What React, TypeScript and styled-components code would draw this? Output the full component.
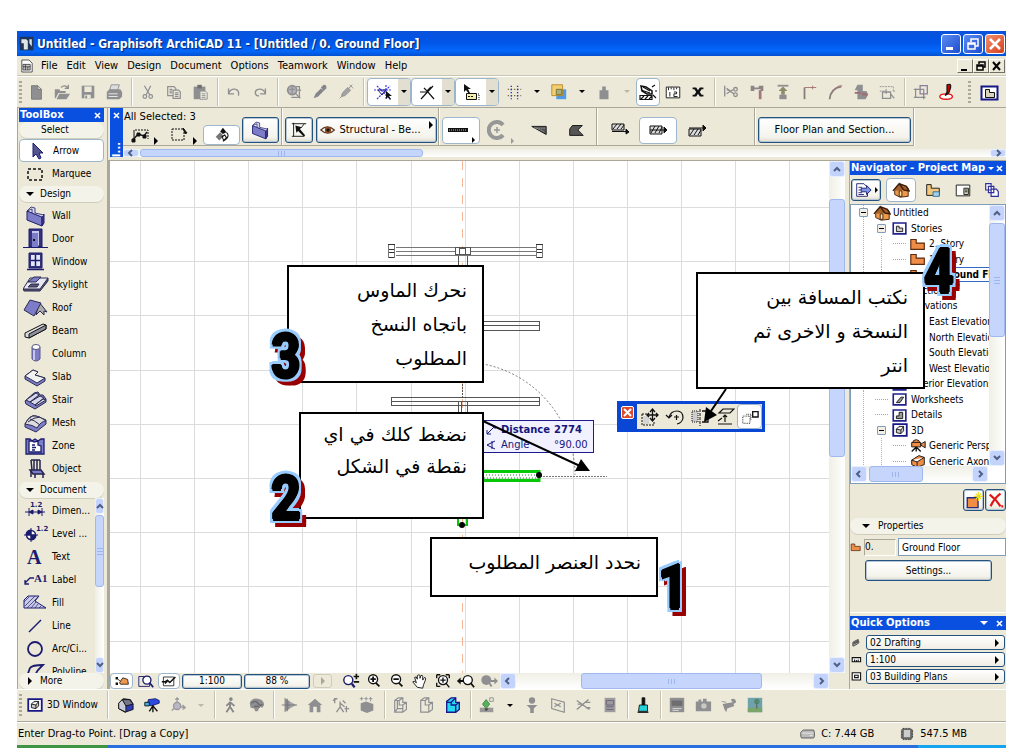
import React from "react";
import styled, { createGlobalStyle, css } from "styled-components";

const UI = `"DejaVu Sans Condensed", Tahoma, "DejaVu Sans", sans-serif`;
const WIDE = `"DejaVu Sans", Verdana, sans-serif`;
const FACE = "#ece9d8";
const BLUE = "#0a50e0";

const Global = createGlobalStyle`
  *, *::before, *::after { box-sizing: border-box; }
  body { margin: 0; background: #fff; font: 11px/14px ${UI}; color: #000; }
  button, input, select { font: inherit; color: inherit; padding: 0; margin: 0; border: 0; background: none; border-radius: 0; }
  svg { display: block; flex: none; }
  ul { list-style: none; margin: 0; padding: 0; }
`;

/* ---------- icons ---------- */

const G = "#8f8f92";
const K = "#111";
const N = "#1c1c6e";
const P = "#7c7cc8";
const L = "#c4c4ee";

const icons: Record<string, React.ReactNode> = {
  /* main toolbar */
  newDoc: <path d="M5 3h7l4 4v11H5z M12 3v4h4" fill={G} stroke="#77777b" />,
  open: <g fill={G}><path d="M2 7h5l1 2h6v2H6l-3 6H2z" /><path d="M7 12h12l-4 6H4z" /><path d="M9 5q4-4 8 1M17 2v4h-4" fill="none" stroke={G} strokeWidth="1.5" /></g>,
  save: <g><path d="M3 3h14v14H3z" fill={G} /><path d="M6 4h8v6H6zM6 13h7v4H6z" fill={FACE} /><path d="M7 14h2v3H7z" fill={G} /></g>,
  print: <g fill={G}><path d="M7 2h9l-2 6H5z" fill="#ddd" stroke={G} /><path d="M2 10l3-3h12l2 3v5l-3 3H2z" /><path d="M4 12h10M4 15h10" stroke="#eee" /></g>,
  cut: <g fill="none" stroke={G} strokeWidth="1.4"><path d="M6 3l6 10M13 3L8 13" /><circle cx="6.500" cy="15" r="2" /><circle cx="13" cy="15" r="2" /></g>,
  copy: <g fill={FACE} stroke={G} strokeWidth="1.3"><path d="M3 4h7l2 2v8H3z" /><path d="M9 8h6l2 2v7H9zM11 11h4M11 13h4M11 15h4M5 7h3M5 9h3M5 11h3" /></g>,
  paste: <g><path d="M3 4h13v14H3z" fill={G} /><path d="M7 2h5v4H7z" fill="#6f6f72" /><path d="M10 9h6l2 2v7h-8z" fill={FACE} stroke={G} /><path d="M12 12h4M12 14h4M12 16h4" stroke={G} /></g>,
  undo: <path d="M4 6v6h6M4 12q2-6 8-5q4 1 3 7" fill="none" stroke={G} strokeWidth="1.5" />,
  redo: <path d="M16 6v6h-6M16 12q-2-6-8-5q-4 1-3 5q1 3 4 2" fill="none" stroke={G} strokeWidth="1.5" />,
  findSel: <g fill="none" stroke={G} strokeWidth="1.4"><circle cx="8" cy="8" r="5" fill="#b5b4ba" strokeWidth="2" /><path d="M5 7h6M8 4v8M12 12l5 5" /><path d="M12 4h4v12H7M14 8h4" /></g>,
  dropper: <path d="M3 17l2-5 6-6 3 3-6 6zM11 5l3-3q4 0 3 4l-3 3z" fill="#85858c" />,
  syringe: <g fill="#a3a3a3" stroke={G}><path d="M3 17l3-3M6 11l6-6 3 3-6 6-4 1z" /><path d="M12 7l5-5M14 2l4 4" /></g>,
  snapGuide: <g fill="none"><path d="M1 8h18M4 17L17 4M4 4l13 13M13 3v14" stroke="#3a3af0" strokeDasharray="2 1" strokeWidth="1.2" /><path d="M5 8l4 5 4-5z" stroke={N} /><path d="M13 9v8l2-2 2 3 1-1-2-3h3z" fill={K} /></g>,
  snapPoint: <path d="M4 17L16 4M3 10h8l6 7M7 6l3 3 4-4" fill="none" stroke={K} strokeWidth="1.2" />,
  tracker: <g><path d="M3 2v8l2-2 3 4 1-1-2-4h3z" fill={K} /><path d="M5.500 11.500h10v6h-10z" fill="#f3f0b0" stroke={K} /><path d="M7 14.500h6" stroke={K} strokeDasharray="2 1" /><path d="M17 12h1v6h-1" stroke={K} fill="none" strokeDasharray="1 1" /></g>,
  gridSnap: <g stroke="#77773f" strokeWidth="1.500" strokeDasharray="1.500 2"><path d="M3 7h15M3 14h15" /><path d="M7 3v15M14 3v15" stroke="#2323ee" /></g>,
  layers: <g><path d="M7 7h11v11H7z" fill="#4f9be8" /><path d="M2 2h12v12H2z" fill="#f3cf72" stroke="#b78825" /><path d="M7 7h6v6H7z" fill="#a6b07b" stroke="#756a33" /></g>,
  weight: <path d="M8 4h4v4h3v10H5V8h3z" fill={G} />,
  suspend: <g stroke={K} fill="none" strokeWidth="1.2"><path d="M2 13.500h12v4H2zM3 17l3-3M7 17l3-3M11 17l3-3" /><path d="M3 4l5 1 6 4v3H9L4 9z" fill="#fff" strokeWidth="1.500" /><path d="M3 8l9 3M5 5l7 4M14 5l3-2M17 9h2M15 13l3 3" /></g>,
  ruler: <g stroke={K} fill="#fff"><path d="M2.500 4.500h15v12h-15z" /><path d="M5 5v3M8 5v2M11 5v3M14 5v2M6.500 10v5M11 10h3v2h-3v3h4" fill="none" /></g>,
  cross: <path d="M4 5h4l2 3 2-3h4v2h-2l-2 3 2 3h2v2h-4l-2-3-2 3H4v-2h2l2-3-2-3H4z" fill={K} />,
  trim: <g fill="none" stroke={G} strokeWidth="1.5"><path d="M3 3v12M6 8h3M5 6l8 6M5 12l8-5" /><circle cx="15" cy="7" r="2" /><circle cx="15" cy="13" r="2" /></g>,
  hammer: <g fill="#8c8487"><path d="M3 3h4v2h5V3h5v6h-3V7H7v2H3z" /><path d="M12 8h3v10h-3z" fill="#a3777a" /></g>,
  adjust: <g fill={G}><path d="M4 2h12v2H4z" /><path d="M10 4l5 5h-3v4H8V9H5z" fill="#8c8c69" /><path d="M6 13h8v5H6z" /></g>,
  corner: <g fill="none"><path d="M5 18V5" stroke="#8c7c7c" strokeWidth="2" /><path d="M5 5h13M14 3v4" stroke="#a56f70" /></g>,
  fillet: <g fill="none"><path d="M4 18Q5 6 17 4" stroke="#8c7c7c" strokeWidth="2" /><path d="M9 7q5-5 9-4" stroke="#a56f70" /></g>,
  resize: <g fill={G}><path d="M6 2h6v7h4l2 4-3 5H6V8H3z" /><path d="M3 10h7v2H3zM11 11h6v3h-6z" fill="#9f6f73" /></g>,
  stretch: <g fill="none" stroke={G}><path d="M2 4h15v5M2 9h5M17 9h2" strokeDasharray="2 1" /><path d="M5 10h9v7H5zM9 7v5M14 12l4 5" strokeWidth="1.4" /></g>,
  group: <g fill="none" stroke={G} strokeWidth="1.4"><path d="M4 7h9v9H4z" /><path d="M9 3h8v9H9z" stroke="#8a7d9d" /><path d="M2 7h4M2 16h4M11 16h4M13 14v4" /></g>,
  pen: <g><ellipse cx="9" cy="15" rx="7" ry="3" fill="#fff" stroke="#e81414" strokeWidth="1.5" /><path d="M8 14l2-4V2q5-2 4 3l-2 6z" fill="#c00" stroke={K} strokeWidth="1.300" /></g>,
  planView: <g><path d="M2.500 4.500h16v13h-16z" fill="#fff" stroke="#171785" strokeWidth="2" /><path d="M6.500 7.500h4v3h5v5h-9z" fill="#d9d4bd" stroke={K} /></g>,
  /* info box */
  selBox: <g fill="none" stroke={K}><path d="M5 5h13v9" strokeDasharray="2 1" /><path d="M3 15l5-6 6 2 3-4" strokeWidth="1.4" /><path d="M2 14h3v3H2zM7 8h3v3H7zM13 10h3v3h-3z" fill={K} /><path d="M4 5v12" /></g>,
  marqBox: <g fill="none" stroke={K}><path d="M3 4h12v11H3z" strokeDasharray="2 1" /><path d="M14 3l4 5-2 .500z" fill={K} /></g>,
  rotFill: <g><path d="M3 12l5-5 4 4-5 5z" fill="#777" /><path d="M11 2l4 5-4 2-3-3z" fill={K} /><path d="M15 7q4 4-1 8l-3 2M10 12l3-2 2 3-3 3z" fill="none" stroke={K} strokeWidth="1.2" /></g>,
  invPick: <g><path d="M2 3h16M2 17h14M4 2v15M16 3l-4 5" stroke={K} fill="none" /><path d="M6 5l7 2-2 2 6 7-2 1-6-6-2 2z" fill={K} /></g>,
  eye: <g><path d="M1 10q8-8 17 0q-8 8-17 0z" fill="#fff" stroke="#5b3a24" strokeWidth="1.4" /><circle cx="10" cy="10" r="4" fill="#8a4b20" /><circle cx="10" cy="10" r="2" fill={K} /></g>,
  straight: <g><path d="M0 8h20v4H0z" fill={K} /><path d="M1 10h18" stroke="#bbb" strokeDasharray="1 1" /></g>,
  arcWall: <g fill="none" stroke="#979797"><path d="M16 5a8 8 0 1 0 0 10" strokeWidth="4" /><path d="M7 10h6M10 7v6" strokeWidth="1.500" /></g>,
  trapWall: <g><path d="M2 6h16v9z" fill="#565656" stroke={K} /><path d="M5 7l11 5M4 8h13" stroke="#aaa" strokeDasharray="1 1" /></g>,
  polyWall: <path d="M6 5h11l-5 5 6 6H3V9z" fill="#565656" stroke={K} />,
  refA: <g><path d="M2 4h12v6H2z" fill="#ddd" stroke={K} /><path d="M3 9l4-5M7 9l4-5M11 9l3-4M2 11.500h16M16 9l3 3-3 2z" stroke={K} fill={K} /></g>,
  refB: <g><path d="M2 6h12v8H2z" fill="#ddd" stroke={K} /><path d="M3 13l4-7M7 13l4-7M11 13l3-6M2 10h16M16 7l3 3-3 3z" stroke={K} fill={K} /></g>,
  refC: <g><path d="M2 9h12v7H2z" fill="#ddd" stroke={K} /><path d="M3 15l4-6M7 15l4-6M11 15l3-5M2 8h16M16 5l3 3-3 3z" stroke={K} fill={K} /></g>,
  /* toolbox, 26 x 22 */
  arrow: <path d="M9 3v14l3-3 3 5 2-1-2-5h4z" fill="#555590" stroke={N} />,
  marquee: <path d="M5 6h14v11H5z" fill="none" stroke={K} strokeWidth="1.500" strokeDasharray="3 2" />,
  wall: <g stroke={N}><path d="M4 6l15 6v9L4 15z" fill={P} /><path d="M19 12l2-3v9l-2 3z" fill="#44448c" /><path d="M4 6l4-4 4 1v5l9 2-2 2L9 8V4z" fill="#d8d8e8" strokeWidth=".800" /></g>,
  door: <g><path d="M6 1h13v18H6z" fill="#33337c" stroke={N} /><path d="M9 3h7v14l-2 2V5H9z" fill={L} /><path d="M9 5h6v14H9z" fill={P} /><path d="M0 19.500h25" stroke={N} /><path d="M10 11h2v2h-2z" fill={K} /></g>,
  window: <g><path d="M6 2h13v15H6z" fill="#33337c" stroke={N} /><path d="M8 4h9v11H8z" fill="#e6e6fb" /><path d="M12.500 4v11M8 9.500h9M4 18.500h17" stroke={N} strokeWidth="1.500" /></g>,
  skylight: <g stroke="#2c2c50"><path d="M0 15l4-4h15l6-7v3l-8 10H1z" fill="#55556c" /><path d="M7 4h18l-8 11H0z" fill="#e8e8f4" /><path d="M8 10h8l-2 3H5z" fill="#55556c" /><path d="M5 8l6-5h7l-5 5z" fill={P} /></g>,
  roof: <g stroke="#2c2c50"><path d="M16 5l8 10-3-1v4l-4-4-4 4z" fill="#aaa" /><path d="M1 13L7 3l11 3-7 13z" fill={P} /></g>,
  beam: <g stroke={K}><path d="M2 13L20 4l3 1v4L6 18l-4-1z" fill="#ddd" /><path d="M6 14l17-9v4L6 18z" fill="#8e8e9d" /></g>,
  column: <g stroke="#5b5b86"><path d="M9 4v12q4 4 8 0V4z" fill={P} /><ellipse cx="13" cy="4" rx="4" ry="2.500" fill="#fff" /><path d="M11 7v10" stroke={L} strokeWidth="2" /></g>,
  slab: <g stroke="#2c2c50"><path d="M2 10l8-6 5 2-3 3 10 3v3l-8 5L2 13z" fill={P} /><path d="M2 10l8-6 5 2-3 3 10 3-8 5z" fill="#f2f2f2" /></g>,
  stair: <g stroke="#2c2c50"><path d="M2 12l9-8 4-1 2 3 3 0 3 4v3l-11 7-9-5z" fill={P} /><path d="M3 11l10-7 3 2-9 7zM7 13l10-6 4 2-9 7zM12 16l8-6 3 1-10 6z" fill="#d7d7ea" /></g>,
  mesh: <g stroke="#2c2c50"><path d="M2 12q5-10 11-8t10 4v4l-10 8-11-5z" fill={P} /><path d="M2 12q5-9 10-8q4 0 11 5q-5 0-9 7q-4-3-12-4zM7 7q4 1 10 6M5 10q6-5 12-5" fill="#ddd" /></g>,
  zone: <g fill="#fff" stroke={N} strokeWidth="1.300"><path d="M3 4h4l2 2 3-2 3 2 3-2h3v15H3z" fill={P} /><path d="M6 6h3l2 1 4-1v4l3 1v6H6z" /><path d="M9 10h3M9 12.500h4M9 15h3" /></g>,
  object: <g fill="none" stroke="#24244c" strokeWidth="1.500"><path d="M8 2h9M8 2l1 10M11 2v10M14 2v10M17 2v10" /><path d="M7 12h11l3 4H10z" fill={P} /><path d="M8 13v6M20 16v4M12 16v4" /></g>,
  dimension: <g stroke={N} fill={N}><path d="M2 12h20M6 8v8M19 8v8M6 12l4-2v4zM19 12l-4-2v4z" /><text x="7" y="7" fontFamily={WIDE} fontWeight="700" fontSize="7" stroke="none">1.2</text></g>,
  level: <g stroke={N} fill={N}><circle cx="8" cy="12" r="4.500" fill="#fff" strokeWidth="1.500" /><path d="M8 7v5H3q0-5 5-5zM8 17v-5h5q0 5-5 5zM1 12h14M8 5v14" /><text x="13" y="8" fontFamily={WIDE} fontWeight="700" fontSize="7" stroke="none">1.2</text></g>,
  text: <text x="4" y="18" fontFamily="Liberation Serif, serif" fontWeight="700" fontSize="20" fill={N}>A</text>,
  label: <g><path d="M2 14l5-5h4M2 11v4h4" stroke={N} fill="none" strokeWidth="1.300" /><text x="11" y="13" fontFamily="Liberation Serif, serif" fontWeight="700" fontSize="11" fill={N}>A1</text></g>,
  fill: <g stroke={N}><path d="M1 16V8l4-4h11l-4 5 11 7z" fill="#c9c9e8" /><path d="M2 14L12 4M4 16L15 5M8 16l5-6M12 16l3-4M16 16l2-2M1 10l5-5" strokeWidth=".700" /></g>,
  line: <path d="M6 17L18 5" stroke={N} strokeWidth="1.500" />,
  circle: <circle cx="12" cy="11" r="7" fill="none" stroke={N} strokeWidth="1.800" />,
  polyline: <path d="M3 18l4-11q2-3 13-3l-5 5q-3 4-3 9" fill="none" stroke={N} strokeWidth="1.800" />,
  /* navigator */
  chooser: <g><path d="M3 3h8l4 4v10H3z" fill="#fff" stroke={N} /><path d="M5 7h4M5 10h3M5 13h4M5 15h6" stroke={N} /><path d="M8 8h6V5l5 5-5 5v-3H8z" fill="#7d97e6" stroke={N} /></g>,
  house: <g stroke="#3a1d08"><path d="M3 10l5-6 10 4v9l-9 1-6-3z" fill="#f0994b" /><path d="M1 11l7-8 5 7M8 3l8 3 3 5-6-1" fill="#a5612b" strokeWidth="1.500" /><path d="M8 11h3v6H8z" fill="#ffe6b0" /></g>,
  viewMap: <g stroke={K}><path d="M3 4h5v4h9v8H3z" fill="#f3c77d" /><path d="M10 12h7v5h-7z" fill="#9fd4f0" stroke="#31688c" /></g>,
  layout: <g stroke={K}><path d="M2.500 4.500h15v12h-15z" fill="#fff" /><path d="M11 8h5v7h-5z" fill="#d8e0b9" /><path d="M12 10h3M12 12h3" /></g>,
  publish: <g fill="#fff" stroke="#2e2e9e" strokeWidth="1.300"><path d="M3 3h6v7H3zM6 6h6v7H6zM9 9h6l2 3v5H9z" /></g>,
  story: <path d="M2 5h6v4h9v7H2z" fill="#ee8d48" stroke="#5b2c10" strokeWidth="1.300" />,
  treeBox: <g><path d="M2.500 4.500h14v12h-14z" fill="#fff" stroke="#20208c" strokeWidth="1.800" /><path d="M6 8h3v2h4v4H6z" fill="#ccc" stroke={K} /></g>,
  elev: <path d="M3 15V6l5-3 6 3v9z" fill="#ee8d48" stroke="#5b2c10" />,
  sheet: <g><path d="M2.500 4.500h14v12h-14z" fill="#fff" stroke="#20208c" strokeWidth="1.800" /><path d="M6 14l5-6 3 0-4 6z" fill="#999" stroke={K} /></g>,
  detail: <g><path d="M2.500 4.500h14v12h-14z" fill="#fff" stroke="#20208c" strokeWidth="1.800" /><path d="M6 14v-3h3V7h4v7z" fill="#999" stroke={K} /></g>,
  camera: <g fill="#ee8d48" stroke={K}><circle cx="8" cy="7" r="4" /><path d="M3 6h10v5H3zM13 8l5-3v7l-5-3z" /><path d="M8 11l-5 5M8 11l5 5M8 11v5" strokeWidth="1.500" /></g>,
  axon: <path d="M3 9l8-5 6 2v8l-8 3-6-3zM3 9l6 2 8-5M9 11v6" fill="#ee8d48" stroke={K} />,
  newStory: <g><path d="M2.500 7.500h12v11h-12z" fill="#f08e46" stroke="#2a2a7a" strokeWidth="1.500" /><path d="M15 1v10M10 6h10M12 3l6 6M18 3l-6 6" stroke="#e8dc28" strokeWidth="1.300" /></g>,
  del: <path d="M3 4q7 5 12 13M15 3Q8 8 4 17M16 17h2" fill="none" stroke="#e11616" strokeWidth="2.500" />,
  stack: <path d="M4 8l8-4v3l1 0v3l-8 5H3V9zM4 10l8-4M4 12l8-4" fill="#aaa" stroke={K} />,
  scale: <path d="M2 6h14v7H2zM6 9v4M9 10v3M12 9v4" fill="#fff" stroke={K} strokeWidth="1.800" />,
  frame: <g fill="#fff" stroke={K} strokeWidth="1.800"><path d="M2 3h14v12H2z" /><path d="M6 7h6v4H6z" /></g>,
  /* canvas bottom strip */
  quickOpt: <g><path d="M2 5h3v3H2zM2 12h3v3H2z" fill={K} /><path d="M7 12l4-6 6 2 1 6H8z" fill="#f0994b" stroke={K} /><path d="M5 8l3 2" stroke={K} /></g>,
  zoomBox: <g fill="#fff"><path d="M2 5h12v11H2z" fill="none" stroke={N} /><circle cx="11" cy="9" r="4.500" stroke={N} strokeWidth="1.500" /><path d="M14 12l4 5" stroke={N} strokeWidth="2" /></g>,
  section: <g><path d="M3 5h13v11H3z" fill="#fff" stroke={K} /><path d="M1 11h4l3-2 3 3 7-7M5 13l4-4" fill="none" stroke={K} strokeWidth="1.800" /></g>,
  zoomPm: <g><circle cx="7" cy="9" r="5" fill="#fff" stroke={N} strokeWidth="1.600" /><path d="M11 13l3 4" stroke={N} strokeWidth="2.500" /><path d="M13 5h6M16 2v6M13 11h6" stroke={K} strokeWidth="1.800" /></g>,
  zoomIn: <g stroke={K}><circle cx="9" cy="8" r="5" fill="#fff" strokeWidth="1.500" /><path d="M6 8h6M9 5v6M12 12l4 4" strokeWidth="2" /></g>,
  zoomOut: <g stroke={K}><circle cx="9" cy="8" r="5" fill="#fff" strokeWidth="1.500" /><path d="M6 8h6M12 12l4 4" strokeWidth="2" /></g>,
  hand: <path d="M7 17l-5-6q1-2 4 1L4 6q2-2 3 2V4q2-2 3 0v3l1-3q2-1 2 1v4l2-3q2 0 1 3l-2 5-1 4z" fill="#fff" stroke={K} />,
  fit: <g stroke={K}><circle cx="10" cy="9" r="5" fill="#fff" strokeWidth="1.500" /><path d="M3 3h4M3 3v4M17 3h-4M17 3v4M3 16h4M3 16v-4M13 12l4 5M7 9h6M10 6v6" strokeWidth="1.500" /></g>,
  zoomPrev: <g><circle cx="12" cy="9" r="5" fill="#fff" stroke={K} strokeWidth="1.500" /><path d="M15 12l4 5M1 10h6" stroke={K} strokeWidth="2" /><path d="M0 10l4-4v8z" fill={K} /></g>,
  zoomNext: <g><circle cx="7" cy="9" r="5.500" fill={G} /><path d="M10 12l3 4M12 10h6" stroke={G} strokeWidth="2" /><path d="M20 10l-4-4v8z" fill={G} /></g>,
  /* 3D toolbar */
  win3d: <g><path d="M2.500 3.500h15v13h-15z" fill="#fff" stroke="#171785" strokeWidth="2" /><path d="M6 9l3-3h5v5l-3 3-5-1zM6 9l5 1 3-4M11 10v4" fill="#ccc" stroke={K} /></g>,
  house3d: <g stroke={K}><path d="M3 8l5-5 8 1 3 5v6l-9 3-7-4z" fill="#2f3bb4" /><path d="M3 8l4-4 4 6v8l-8-4z" fill="#c9c9d6" /><path d="M7 4l8 0 4 5-8 2z" fill="#77778c" /></g>,
  cam3d: <g><path d="M6 4l8-1 4 2v3l-9 3-4-2z" fill="#2b4be0" stroke={N} /><path d="M2 7h5v4H2z" fill="#35b3e8" stroke={K} /><path d="M11 10v8M11 11l-4 6M11 11l5 6" stroke={K} strokeWidth="1.500" /></g>,
  axes: <g fill="none" stroke="#96969c" strokeWidth="1.400"><path d="M9 3v8l8 2M9 11l-6 5M7 4l2-2 2 2M15 10l3 3-3 2" /><circle cx="9" cy="11" r="4" fill="#bbb8c5" /></g>,
  walk: <g stroke="#85858a" strokeWidth="2" fill="none"><circle cx="11" cy="3.500" r="1" /><path d="M10 6v6l4 6M10 12l-4 6M10 7L6 11M10 7l5 4" /></g>,
  globe: <g fill={G}><path d="M3 8q2-6 9-5 7 1 7 7l-2 3-3-1-2 5H9l-1-3-4-1z" /><path d="M5 8q4-4 7 0t5 1M8 12q4-2 6 1" stroke="#66666b" fill="none" strokeWidth="1.500" /></g>,
  cut3d: <g fill={G}><path d="M5 2l6 4v8l-6 4z" /><path d="M11 6l7 4-7 4z" fill="#a5a5a8" /><path d="M2 10h17M8 3v14" stroke="#77777c" /></g>,
  home: <path d="M10 3l8 7h-2v8H4v-8H2zM8 12v6h4v-6z" fill={G} fillRule="evenodd" />,
  sun: <g stroke={G} strokeWidth="1.500" fill="none"><path d="M1 5l4-2M3 8V3h3M9 6v6l-4 6M9 12l4 6M9 8l5 4M14 14h5M16 11v7M12 5l3 3" /></g>,
  box3d: <g fill={G}><path d="M3 8l6-2 8 3v7l-7 3-7-3z" /><path d="M4 1v4M9 1v4M14 1v5M2 3h4M7 3h4M12 3h4" stroke={G} /></g>,
  cubeA: <path d="M3 5l4-3h5v5h4v8l-4 3H3zM3 5h5v5h4v8M8 5l4-3M12 10l4-3M6 5v9h6M6 14l-3 4" fill="none" stroke={G} strokeWidth="1.300" />,
  cubeB: <path d="M3 5l4-3h5v5h4v8l-4 3H3zM3 5h5v5h4v8M8 5l4-3M12 10l4-3" fill="none" stroke={G} strokeWidth="1.300" />,
  cubeC: <g stroke="#17178c" strokeWidth="1.500"><path d="M3 6l5-4h5v5h4v8l-4 3H3z" fill="#25d9f2" /><path d="M3 7h5v3h5v8M8 7l5-5M13 10l4-3" fill="none" /></g>,
  plant: <g><path d="M2 13h15v5H2z" fill="#999" /><path d="M9 4l4 5-4 5-4-5z" fill="#54b357" stroke="#4f7d4f" /><path d="M13 2h4v4h-4z" fill="none" stroke={G} /><path d="M7 14l2 3 3-3z" fill="#444" /></g>,
  filter: <g fill={G}><circle cx="10" cy="5" r="3.500" /><path d="M4 10h12l-4 4v5H8v-5z" /></g>,
  mirror: <g fill="none" stroke={G} strokeWidth="1.300"><path d="M3 3l14 4v11L3 14zM6 8l7 4M13 8l-7 4" /></g>,
  weld: <path d="M2 5l14 10M2 15L15 4M3 9h5M12 7h5M12 13h5" fill="none" stroke={G} strokeWidth="1.500" />,
  doc3d: <g><path d="M4 2h12v16H4z" fill="#9b9b9e" /><path d="M6 5h8v5H6zM6 12h8M6 15h8" fill="none" stroke="#70607a" /></g>,
  brush: <g stroke={K}><path d="M9 2h3v8H9z" fill={K} /><path d="M6 10h9v7H5z" fill="#22d3da" /><path d="M4 18h12" strokeWidth="1.500" /></g>,
  photo: <g fill={G}><path d="M2 2h16v16H2z" /><path d="M4 5h12v6H4z" fill="#6d6d72" /><path d="M5 14h10M5 16h7" stroke="#ddd" /></g>,
  film: <g fill={G}><path d="M2 6h3V4h3v2h2V3h4v3h5v11H2z" /><circle cx="11" cy="11" r="3" fill="#c9c8c1" /></g>,
  movie: <g fill={G}><path d="M3 9l11-2 2 4-8 3-1 4-2-3zM12 4q5-3 6 3l-3 2z" /><path d="M2 6l5 1" stroke={G} /></g>,
  scene: <g><path d="M2 2h16v16H2z" fill="#6ea2ad" /><path d="M2 13h16v5H2z" fill="#7ba36c" /><circle cx="12" cy="6" r="3" fill="#54876d" /><path d="M12 8v6" stroke="#5c5548" /></g>,
  drive: <g stroke="#444"><path d="M1 8l3-3h13l1 3v5l-1 2H2l-1-2z" fill="#bbb" /><path d="M2 9h15M12 12h4" stroke="#eee" /></g>,
  chip: <g><path d="M5 3h9l3 2v9l-2 3H5l-2-2V5z" fill="#666" stroke={K} strokeDasharray="1 1" /><path d="M6 5h8v9H6z" fill="#ccc" /></g>,
  /* drag palette */
  dragMove: <g stroke={K} fill="none"><path d="M3 9h6v8H3z" fill="#d5d5d5" stroke="none" /><path d="M2 7h5M2 7v11h12v-4" strokeDasharray="2 1" /><path d="M7 8h11M12.500 2v12M10 5l2.500-3L15 5M10 11l2.500 3 2.500-3M9 6L7 8l2 2M16 6l2 2-2 2" strokeWidth="1.300" /></g>,
  rotate: <g stroke={K} fill="none" strokeWidth="1.200"><path d="M4 10q2-6 8-6t6 7q-1 5-6 6M1 8l3 3 3-3" /><path d="M9 10h5M11.500 8v5" /></g>,
  mirrorPal: <g stroke={K} fill="none"><path d="M2 4h6v11H2z" fill="#ccc" strokeDasharray="1 1" /><path d="M10 2v17" strokeDasharray="3 1" /><path d="M12 4h6v11h-6" strokeWidth="1.300" /></g>,
  elevate: <g stroke={K} fill="none" strokeWidth="1.200"><path d="M4 6l4-4h11l-4 4zM3 14l4-3M3 17h14M10 8v7M8 10l2-2 2 2" /></g>,
  copyDrag: <g stroke={K} fill="none"><path d="M2 9h8v8H2z" strokeDasharray="1 1" /><path d="M6 7h5v6" strokeDasharray="1 1" /><path d="M13 4h6v6h-6z" strokeWidth="1.500" /></g>,
  appIcon: <g><path d="M1 1h17v17H1z" fill="#1e3558" /><path d="M3 4h6l2 2v11H6V9H3zM13 4h3v9l-3-4z" fill="#dfe6e8" /></g>,
  docIcon: <g fill="#fff" stroke="#333"><path d="M3.500 2.500h9l4 4v11h-13z" /><path d="M5 8h9v7H5zM8 8v7M5 11h9M11 11v4" fill="#ccc" /></g>,
};

const Icon = ({ name, w = 20, h = 20, s = 1 }: { name: string; w?: number; h?: number; s?: number }) => (
  <svg viewBox={`0 0 ${w} ${h}`} width={Math.round(w * s)} height={Math.round(h * s)} aria-hidden="true">
    {icons[name]}
  </svg>
);

/* ---------- window frame ---------- */

const Page = styled.main`
  position: relative;
  height: 100vh;
  min-height: 700px;
  padding: 31px 13px 0 17px;
  overflow: hidden;
`;
const Frame = styled.div`
  display: flex;
  flex-direction: column;
  height: 100%;
  background: ${FACE};
`;
const TitleBar = styled.header`
  display: flex;
  align-items: center;
  height: 25px;
  flex: none;
  padding: 0 1px 0 2px;
  background: linear-gradient(#0a52dc, #0055e6 45%, #0468fb 80%, #0350cf);
  color: #fff;
`;
const WindowTitle = styled.h1`
  flex: 1;
  margin: 0;
  padding-left: 2px;
  font: bold 12px/18px ${UI};
  text-shadow: 1px 1px 1px #06246e;
  white-space: nowrap;
`;
const CaptionButton = styled.button<{ $close?: boolean }>`
  width: 20px;
  height: 20px;
  margin-left: 2px;
  border: 1px solid #fff;
  border-radius: 3px;
  background: ${(p) => (p.$close ? "linear-gradient(135deg,#f09070,#d8401c)" : "linear-gradient(135deg,#5c8cf0,#1c4cd0)")};
`;
const MenuBar = styled.nav`
  display: flex;
  align-items: center;
  height: 20px;
  flex: none;
  padding: 0 1px 0 2px;
  border-bottom: 1px solid #c9c6b6;
`;
const MenuItem = styled.button`
  margin-left: 3px;
  padding: 0 3px;
  line-height: 12px;
  white-space: nowrap;
`;
const Spacer = styled.span`flex: 1;`;
const MdiButton = styled.button`
  width: 16px;
  height: 14px;
  border: 1px solid;
  border-color: #fff #716f64 #716f64 #fff;
`;

/* ---------- toolbars ---------- */

const Toolbar = styled.div<{ $h: number }>`
  display: flex;
  align-items: center;
  flex: none;
  height: ${(p) => p.$h}px;
  padding-left: 1px;
  border-bottom: 1px solid #aca899;
  box-shadow: inset 0 1px #fff;
  overflow: hidden;
`;
const Grip = styled.span`
  width: 3px;
  height: 22px;
  margin: 0 1px 0 1px;
  flex: none;
  background: repeating-linear-gradient(#aca899 0 2px, transparent 2px 4px);
`;
const Sep = styled.span<{ $w?: number }>`
  width: ${(p) => p.$w ?? 8}px;
  height: 28px;
  flex: none;
  background: linear-gradient(90deg, transparent 4px, #c5c2b0 4px 5px, #fff 5px 6px, transparent 6px);
`;
const raised = css`
  background: #fff;
  border: 1px solid #9db6cc;
  border-radius: 4px;
`;
const Tool = styled.button<{ $on?: boolean; $w?: number }>`
  display: flex;
  align-items: center;
  justify-content: center;
  flex: none;
  width: ${(p) => p.$w ?? 26}px;
  height: 28px;
  ${(p) => p.$on && raised}
`;
const Combo = styled.span<{ $on?: boolean }>`
  display: flex;
  flex: none;
  width: ${(p) => (p.$on ? 44 : 45)}px;
  height: 28px;
  overflow: hidden;
  ${(p) => p.$on && raised}
`;
const ComboArrow = styled.button<{ $on?: boolean }>`
  display: flex;
  align-items: center;
  justify-content: center;
  width: ${(p) => (p.$on ? 12 : 19)}px;
  background: ${(p) => (p.$on ? "#e2dfd0" : "none")};
`;
const ComboMain = styled.button<{ $on?: boolean }>`
  display: flex;
  align-items: center;
  justify-content: center;
  width: ${(p) => (p.$on ? 30 : 26)}px;
`;

const Tri = ({ d = "down", c = "#000", s = 4 }: { d?: "down" | "right"; c?: string; s?: number }) =>
  d === "down" ? (
    <svg width={s * 2} height={s} aria-hidden="true"><path d={`M0 0h${s * 2}l${-s} ${s}z`} fill={c} /></svg>
  ) : (
    <svg width={s} height={s * 2} aria-hidden="true"><path d={`M0 0v${s * 2}l${s} ${-s}z`} fill={c} /></svg>
  );

const DropTool = ({ name, on, dim, s = 1 }: { name: string; on?: boolean; dim?: boolean; s?: number }) => (
  <Combo $on={on}>
    <ComboMain $on={on} aria-label={name}><Icon name={name} s={s} /></ComboMain>
    <ComboArrow $on={on} aria-label={`${name} options`}><Tri s={3} c={dim ? "#bbb8a8" : "#000"} /></ComboArrow>
  </Combo>
);
const Tools = ({ names, w, s = 1 }: { names: string[]; w?: number; s?: number }) => (
  <>{names.map((n) => <Tool key={n} $w={w} aria-label={n}><Icon name={n} s={s} /></Tool>)}</>
);

/* ---------- body ---------- */

const Body = styled.div`
  display: flex;
  flex: 1;
  min-height: 0;
`;
const ToolBox = styled.aside`
  display: flex;
  flex-direction: column;
  flex: none;
  width: 91px;
  padding: 0 3px 0 1px;
  border-left: 1px solid #aca899;
  border-right: 1px solid #aca899;
  font-size: 10px;
`;
const PanelTitle = styled.h2`
  display: flex;
  align-items: center;
  flex: none;
  gap: 1px;
  height: 14px;
  margin: 0;
  padding: 0 2px 0 1px;
  background: ${BLUE};
  color: #fff;
  font: bold 10px/14px ${WIDE};
  white-space: nowrap;
`;
const CloseMark = () => (
  <svg width="7" height="7" aria-hidden="true"><path d="M1 1l5 5M6 1L1 6" stroke="#fff" strokeWidth="1.600" /></svg>
);
const TitleClose = styled.button`
  display: flex;
  align-items: center;
  justify-content: center;
  width: 9px;
  height: 14px;
  flex: none;
`;
const GroupHead = styled.button<{ $indent?: number }>`
  display: flex;
  align-items: center;
  gap: 6px;
  flex: none;
  width: 100%;
  height: 16px;
  padding-left: ${(p) => p.$indent ?? 7}px;
  border-radius: 8px;
  background: #f4f3ea;
  box-shadow: 0 1px #d0cdbd;
  white-space: nowrap;
`;
const ToolList = styled.ul<{ $pad?: number; $clip?: boolean }>`
  padding: ${(p) => p.$pad ?? 0}px 0;
  flex: ${(p) => (p.$clip ? "1 1 0" : "none")};
  min-width: 0;
  overflow: hidden;
`;
const ToolRow = styled.button<{ $on?: boolean }>`
  display: flex;
  align-items: center;
  gap: 3px;
  width: 100%;
  height: 23px;
  padding-left: 4px;
  white-space: nowrap;
  ${(p) => p.$on && raised}
`;
const DocArea = styled.div`
  display: flex;
  flex: 1;
  min-height: 0;
`;

/* ---------- scrollbars ---------- */

const Track = styled.div<{ $v?: boolean; $t: number }>`
  display: flex;
  flex-direction: ${(p) => (p.$v ? "column" : "row")};
  ${(p) => (p.$v ? `width: ${p.$t}px; background: linear-gradient(90deg,#f0efe6,#fff);` : `height: ${p.$t}px; background: linear-gradient(#f0efe6,#fff);`)}
  flex: none;
  min-width: 0;
`;
const ScrollButton = styled.button<{ $l: number }>`
  display: flex;
  align-items: center;
  justify-content: center;
  flex: 0 0 ${(p) => p.$l}px;
  border: 1px solid #e8f0ff;
  border-radius: 3px;
  background: #c3d3fb;
`;
const Thumb = styled.div<{ $l: number; $before: number; $v?: boolean }>`
  flex: 0 0 ${(p) => p.$l}px;
  margin: ${(p) => (p.$v ? `${p.$before}px 0 auto` : `0 auto 0 ${p.$before}px`)};
  border: 1px solid #9fb8ef;
  border-radius: 3px;
  background:
    repeating-linear-gradient(${(p) => (p.$v ? "0deg" : "90deg")}, #9db6f0 0 1px, transparent 1px 3px) center / ${(p) => (p.$v ? "6px 8px" : "8px 5px")} no-repeat,
    #c6d5fc;
`;
const chev: Record<string, string> = { up: "M1 6l3-3 3 3", down: "M1 2l3 3 3-3", left: "M5 1L2 4l3 3", right: "M3 1l3 3-3 3" };
const Chevron = ({ d }: { d: string }) => (
  <svg width="8" height="8" aria-hidden="true"><path d={chev[d]} fill="none" stroke="#4d6185" strokeWidth="2" /></svg>
);
const ScrollBar = ({ v, t, b = t, before, len }: { v?: boolean; t: number; b?: number; before: number; len: number }) => (
  <Track $v={v} $t={t}>
    <ScrollButton $l={b} aria-label={v ? "Scroll up" : "Scroll left"}><Chevron d={v ? "up" : "left"} /></ScrollButton>
    <Thumb $v={v} $l={len} $before={before} />
    <ScrollButton $l={b} aria-label={v ? "Scroll down" : "Scroll right"}><Chevron d={v ? "down" : "right"} /></ScrollButton>
  </Track>
);

/* ---------- info box ---------- */

const RightSide = styled.div`
  display: flex;
  flex-direction: column;
  flex: 1;
  min-width: 0;
`;
const InfoBox = styled.section`
  display: flex;
  flex: none;
  height: 53px;
  padding: 0 0 3px 2px;
  border-bottom: 1px solid #aca899;
`;
const InfoStrip = styled.div`
  display: flex;
  flex-direction: column;
  align-items: center;
  justify-content: space-between;
  width: 13px;
  flex: none;
  background: ${BLUE};
  color: #fff;
`;
const InfoTag = styled.span`
  writing-mode: vertical-rl;
  transform: rotate(180deg);
  font: bold 10px/13px ${WIDE};
`;
const InfoMain = styled.div`
  display: flex;
  flex-direction: column;
  justify-content: space-between;
  flex: 1;
  min-width: 0;
`;
const InfoRow = styled.div`
  display: flex;
  height: 38px;
  overflow: hidden;
`;
const InfoGroup = styled.div<{ $w: number }>`
  display: flex;
  align-items: center;
  flex: none;
  width: ${(p) => p.$w}px;
  padding: 7px 2px 0 3px;
  border-bottom: 1px solid #aca899;
  border-right: 1px solid #aca899;
  box-shadow: 1px 0 #fff;
`;
const FirstGroup = styled(InfoGroup)`
  padding: 0 2px 0 1px;
  align-items: stretch;
`;
const SelectionCol = styled.div`
  display: flex;
  flex-direction: column;
  flex: 1;
  justify-content: space-between;
`;
const Selected = styled.span`
  font: 10px/17px ${WIDE};
`;
const SelTools = styled.div`
  display: flex;
  align-items: center;
  justify-content: flex-end;
  height: 20px;
`;
const Flyout = styled.button<{ $on?: boolean; $w: number; $h?: number }>`
  display: flex;
  align-items: center;
  justify-content: center;
  gap: 4px;
  flex: none;
  width: ${(p) => p.$w}px;
  height: ${(p) => p.$h ?? 27}px;
  ${(p) => p.$on && raised}
`;
const Low = styled.span`align-self: flex-end;`;
const XpButton = styled.button<{ $w?: number; $h: number }>`
  display: flex;
  align-items: center;
  justify-content: center;
  gap: 3px;
  flex: none;
  ${(p) => (p.$w ? `width: ${p.$w}px;` : "")}
  height: ${(p) => p.$h}px;
  border: 1px solid #24527f;
  border-radius: 3px;
  background: linear-gradient(#fff, #f4f3ec 80%, #dfdccd);
  box-shadow: 0 0 0 1px #b6c6d4 inset;
  white-space: nowrap;
`;

/* ---------- canvas ---------- */

const Work = styled.div`
  display: flex;
  flex: 1;
  min-height: 0;
`;
const PlanColumn = styled.section`
  display: flex;
  flex-direction: column;
  flex: 1;
  min-width: 0;
  border-left: 2px solid #aca899;
`;
const PlanArea = styled.div`
  display: flex;
  flex: 1;
  min-height: 0;
  padding-right: 1px;
`;
const Plan = styled.svg`
  flex: 1;
  min-width: 0;
  height: 100%;
  background: #fff;
`;
const PlanBar = styled.div`
  display: flex;
  align-items: center;
  flex: none;
  height: 16px;
  padding-right: 17px;
`;
const HTrack = styled.div`
  display: flex;
  flex-direction: column;
  flex: 1;
  min-width: 0;
`;

/* ---------- navigator ---------- */

const Nav = styled.aside`
  display: flex;
  flex-direction: column;
  flex: none;
  width: 157px;
  margin-left: 3px;
  border-left: 1px solid #aca899;
  font-size: 10px;
`;
const NavTools = styled.div`
  display: flex;
  align-items: center;
  flex: none;
  height: 29px;
  padding-left: 1px;
  gap: 5px;
`;
const TreeBox = styled.div`
  display: flex;
  flex-direction: column;
  flex: none;
  height: 280px;
  background: #fff;
  border: 1px solid #7f9db9;
`;
const TreeView = styled.div`
  display: flex;
  flex: 1;
  min-height: 0;
`;
const TreeClip = styled.div`
  flex: 1;
  min-width: 0;
  overflow: hidden;
`;
const Tree = styled.ul`
  display: flex;
  flex-direction: column;
  height: 264px;
`;
const TreeRow = styled.li<{ $depth: number }>`
  display: flex;
  align-items: center;
  flex: 1;
  min-height: 0;
  padding-left: ${(p) => 6 + p.$depth * 18}px;
  white-space: nowrap;
  background: repeating-linear-gradient(#b5b2a4 0 1px, transparent 1px 2px) 12px 0 / 1px 100% no-repeat
    ${(p) => (p.$depth > 1 ? ", repeating-linear-gradient(#b5b2a4 0 1px, transparent 1px 2px) 30px 0 / 1px 100% no-repeat" : "")};
`;
const Expander = styled.button`
  width: 9px;
  height: 9px;
  margin: 0 5px 0 2px;
  flex: none;
  border: 1px solid #7f9db9;
  border-radius: 1px;
  background: linear-gradient(#000, #000) center / 5px 1px no-repeat, #f1efe6;
`;
const Branch = styled.span`
  width: 13px;
  margin-right: 3px;
  border-top: 1px dotted #aca899;
  flex: none;
`;
const Leaf = styled.span<{ $bold?: boolean }>`
  ${(p) => p.$bold && `font-weight: bold; border: 1px solid #316ac5; border-width: 1px 0;`}
  line-height: 13px;
  padding-left: 2px;
`;
const NavActions = styled.div`
  display: flex;
  justify-content: flex-end;
  gap: 1px;
  padding: 5px 0 7px;
`;
const PropRow = styled.div`
  display: flex;
  align-items: center;
  gap: 2px;
  height: 18px;
  margin: 4px 0;
`;
const StoryNo = styled.output`
  width: 32px;
  height: 17px;
  border: 1px solid;
  border-color: #aca899 #fff #fff #aca899;
`;
const StoryName = styled.input`
  flex: 1;
  width: 0;
  height: 18px;
  padding-left: 3px;
  border: 1px solid #7f9db9;
  background: #fff;
`;
const SettingsWrap = styled.div`
  display: flex;
  padding: 0 14px 0 15px;
  margin-bottom: 31px;
  & > button { flex: 1; }
`;
const Quick = styled.section`
  display: flex;
  flex-direction: column;
  gap: 2px;
  border-top: 1px solid #fff;
  padding-top: 3px;
`;
const QuickRow = styled.label`
  display: grid;
  grid-template-columns: 15px 1fr;
  align-items: center;
  height: 15px;
  padding: 0 1px 0 1px;
`;
const SelectWrap = styled.span`
  display: flex;
  align-items: center;
  height: 15px;
  padding-right: 5px;
  border: 1px solid #24527f;
  border-radius: 3px;
  background: linear-gradient(#fff, #f0eee4);
`;
const Pick = styled.select`
  appearance: none;
  flex: 1;
  height: 13px;
  line-height: 13px;
  padding-left: 3px;
  outline: none;
`;

/* ---------- status ---------- */

const StatusBar = styled.footer`
  display: flex;
  align-items: center;
  flex: none;
  height: 23px;
  padding: 0 19px 0 1px;
  gap: 5px;
  border-top: 1px solid #fff;
`;
const StatusCell = styled.span`
  display: flex;
  align-items: center;
  gap: 5px;
  margin-right: 20px;
`;
const TaskBar = styled.div`
  flex: none;
  height: 3px;
  background: linear-gradient(90deg, #3f9443 91px, #2a6fe0 91px, #2a6fe0 calc(100% - 88px), #14a5ee calc(100% - 88px));
`;

/* ---------- annotations over the window ---------- */

const Callout = styled.p<{ $x: number; $y: number; $w: number; $h: number; $tight?: boolean }>`
  position: absolute;
  left: ${(p) => p.$x}px;
  top: ${(p) => p.$y}px;
  width: ${(p) => p.$w}px;
  height: ${(p) => p.$h}px;
  margin: 0;
  padding: ${(p) => (p.$tight ? 4 : 6)}px 15px;
  border: 2px solid #000;
  background: #fff;
  font: 19px/${(p) => (p.$tight ? 32 : 34)}px "DejaVu Sans", sans-serif;
  white-space: nowrap;
`;
const Numeral = styled.span<{ $x: number; $y: number }>`
  position: absolute;
  left: ${(p) => p.$x}px;
  top: ${(p) => p.$y}px;
  width: 32px;
  display: flex;
  justify-content: center;
  font: bold 62px/66px "Liberation Sans Narrow", "Roboto Condensed", "Open Sans Condensed", "Noto Sans Condensed", "Liberation Sans", sans-serif;
  color: #000;
  text-shadow:
    1px 0 #000, -1px 0 #000, 0 1px #000, 0 2px #000, 0 -1px #000,
    3px 0 #99ccff, -3px 0 #99ccff, 0 4px #99ccff, 0 -4px #99ccff,
    3px 4px #99ccff, -3px 4px #99ccff, 3px -3px #99ccff, -3px -3px #99ccff,
    4px 6px #990000, 6px 6px #990000, 7px 6px #990000, 7px 3px #990000, 7px 8px #990000, 2px 8px #990000;
`;
const Arrows = styled.svg`
  position: absolute;
  inset: 0;
  pointer-events: none;
`;
const Palette = styled.div`
  position: absolute;
  left: 617px;
  top: 401px;
  display: flex;
  align-items: center;
  height: 31px;
  padding: 0 3px 0 4px;
  gap: 3px;
  background: #0a46d4;
`;
const PaletteClose = styled.button`
  align-self: flex-start;
  display: flex;
  align-items: center;
  justify-content: center;
  width: 13px;
  height: 13px;
  margin-top: 5px;
  border: 1px solid #fff;
  border-radius: 2px;
  background: #dd4b2c;
`;
const PaletteTools = styled.div`
  display: flex;
  height: 25px;
  background: ${FACE};
  & > button { height: 25px; }
`;
const Tracker = styled.dl`
  position: absolute;
  left: 470px;
  top: 420px;
  display: grid;
  grid-template-columns: auto auto auto;
  align-items: center;
  column-gap: 4px;
  width: 124px;
  height: 33px;
  margin: 0;
  padding: 1px 7px 1px 14px;
  border: 1px solid #1b1b8e;
  background: #f1f1ff;
  color: #16167c;
  font: 10px/15px ${WIDE};
  & dt, & dd { margin: 0; white-space: nowrap; }
`;
const Strong = styled.b``;

/* ---------- data ---------- */

const menus = ["File", "Edit", "View", "Design", "Document", "Options", "Teamwork", "Window", "Help"];
const designTools = [
  ["wall", "Wall"], ["door", "Door"], ["window", "Window"], ["skylight", "Skylight"], ["roof", "Roof"], ["beam", "Beam"],
  ["column", "Column"], ["slab", "Slab"], ["stair", "Stair"], ["mesh", "Mesh"], ["zone", "Zone"], ["object", "Object"],
];
const docTools = [
  ["dimension", "Dimen..."], ["level", "Level ..."], ["text", "Text"], ["label", "Label"], ["fill", "Fill"],
  ["line", "Line"], ["circle", "Arc/Ci..."], ["polyline", "Polyline"],
];
type Node = { d: number; icon: string; text: string; open?: boolean; bold?: boolean };
const tree: Node[] = [
  { d: 0, icon: "house", text: "Untitled", open: true },
  { d: 1, icon: "treeBox", text: "Stories", open: true },
  { d: 2, icon: "story", text: "2. Story" },
  { d: 2, icon: "story", text: "1. Story" },
  { d: 2, icon: "story", text: "0. Ground Floor", bold: true },
  { d: 1, icon: "treeBox", text: "Sections" },
  { d: 1, icon: "treeBox", text: "Elevations", open: true },
  { d: 2, icon: "elev", text: "East Elevation" },
  { d: 2, icon: "elev", text: "North Elevation" },
  { d: 2, icon: "elev", text: "South Elevation" },
  { d: 2, icon: "elev", text: "West Elevation" },
  { d: 1, icon: "treeBox", text: "Interior Elevations" },
  { d: 1, icon: "sheet", text: "Worksheets" },
  { d: 1, icon: "detail", text: "Details" },
  { d: 1, icon: "win3d", text: "3D", open: true },
  { d: 2, icon: "camera", text: "Generic Perspective" },
  { d: 2, icon: "axon", text: "Generic Axonometry" },
];
const quick = [["stack", "02 Drafting"], ["scale", "1:100"], ["frame", "03 Building Plans"]];

const range = (n: number) => Array.from({ length: n }, (_, i) => i);

const FloorPlan = () => (
  <Plan aria-label="Floor plan" role="img">
    <g fill="#dcdcdc" shapeRendering="crispEdges">
      {range(40).map((i) => <rect key={`v${i}`} x={Math.round(30 + i * 54.1)} y="0" width="1" height="100%" />)}
      {range(20).map((i) => <rect key={`h${i}`} x="0" y={Math.round(46 + i * 54.2)} width="100%" height="1" />)}
    </g>
    {/* axis */}
    <line x1="352.500" y1="0" x2="352.500" y2="100%" stroke="#f9b79a" strokeDasharray="9 8" />
    <g transform="translate(-110 -161)" fill="none" stroke="#555" shapeRendering="crispEdges">
      <path d="M396 247.500h140M396 251.500h140M396 255.500h140" stroke="#777" />
      <path d="M388.500 244.500h6v5h-6zM388.500 252.500h6v5h-6zM536.500 244.500h6v5h-6zM536.500 252.500h6v5h-6z" fill="#fff" stroke="#333" />
      <path d="M388.500 244.500v13M394.500 244.500v13M536.500 244.500v13M542.500 244.500v13" stroke="#777" />
      <path d="M455.500 247.500h15v7h-15zM459.500 248.500h6v6h-6z" fill="#fff" />
      <path d="M458.500 256v12M467.500 256v12" />
      <path d="M391.500 321.500h148v9h-148zM391 325.500h149" />
      <path d="M391.500 397.500h148v8h-148zM391 401.500h149M458.500 402v14M461.500 402v14M467.500 402v14" />
      <path d="M462.500 384v13" strokeDasharray="2 1" />
    </g>
    <g transform="translate(-110 -161)" fill="none">
      <path d="M462 362A113 113 0 0 1 575 475" stroke="#777" strokeDasharray="2 2" />
      <path d="M540 476.500h67" stroke="#777" strokeDasharray="2 1" />
      <path d="M470 471.500h69v9h-69z" stroke="#06c806" strokeWidth="3" />
      <path d="M471 475h67M472 478h66" stroke="#1f8f1f" strokeDasharray="1 2" />
      <path d="M458 510h9v15h-9z" stroke="#06c806" strokeWidth="2" />
      <circle cx="539" cy="475" r="3" fill="#000" />
      <circle cx="462" cy="525" r="3" fill="#000" />
    </g>
  </Plan>
);

const XpButtonLow = styled(XpButton)`align-self: flex-end; margin: 0 0 2px 2px;`;
const XpButtonGap = styled(XpButton)`margin-left: 3px;`;
const Top = styled.span`align-self: flex-start; padding: 3px 0 0 5px;`;

const InfoPalette = () => (
  <InfoBox>
    <InfoStrip><TitleClose aria-label="Close info box"><CloseMark /></TitleClose><InfoTag>I...</InfoTag></InfoStrip>
    <InfoMain>
      <InfoRow>
        <FirstGroup $w={159}>
          <SelectionCol>
            <Selected>All Selected: 3</Selected>
            <SelTools>
              <Flyout $w={38} $h={20}><Icon name="selBox" /><Low><Tri d="right" s={4} /></Low></Flyout>
              <Flyout $w={40} $h={20}><Icon name="marqBox" /><Low><Tri d="right" s={4} /></Low></Flyout>
              <Flyout $w={37} $h={20} $on aria-label="Rotate fill"><Icon name="rotFill" s={0.9} /></Flyout>
            </SelTools>
          </SelectionCol>
          <XpButtonLow $w={37} $h={26} aria-label="Wall settings"><Icon name="wall" w={26} h={22} s={0.9} /></XpButtonLow>
        </FirstGroup>
        <InfoGroup $w={157}>
          <XpButton $w={28} $h={26} aria-label="Pick"><Icon name="invPick" s={0.9} /></XpButton>
          <XpButtonGap $w={121} $h={26}><Icon name="eye" s={0.8} />Structural - Be...<Top><Tri d="right" s={4} /></Top></XpButtonGap>
        </InfoGroup>
        <InfoGroup $w={158}>
          <Flyout $w={38} $on aria-label="Straight"><Icon name="straight" /><Low><Tri d="right" s={3} /></Low></Flyout>
          <Flyout $w={40} aria-label="Curved"><Icon name="arcWall" /><Low><Tri d="right" c="#999" s={3} /></Low></Flyout>
          <Flyout $w={38} aria-label="Trapezoid"><Icon name="trapWall" s={0.9} /></Flyout>
          <Flyout $w={36} aria-label="Polygonal"><Icon name="polyWall" s={0.9} /></Flyout>
        </InfoGroup>
        <InfoGroup $w={158}>
          <Flyout $w={39} aria-label="Left"><Icon name="refA" /></Flyout>
          <Flyout $w={38} $on aria-label="Center"><Icon name="refB" /></Flyout>
          <Flyout $w={40} aria-label="Right"><Icon name="refC" /></Flyout>
        </InfoGroup>
        <InfoGroup $w={159}><XpButton $w={153} $h={26}>Floor Plan and Section...</XpButton></InfoGroup>
      </InfoRow>
      <ScrollBar t={8} b={16} before={1} len={283} />
    </InfoMain>
  </InfoBox>
);

const HWrap = styled.div`padding: 0 17px 1px 0;`;
const Indent = styled.span`padding-left: 2px;`;
const QuickGap = styled.div`height: 1px;`;
const ComboGap = styled.span`width: 2px; flex: none;`;
const TitleTri = styled.span`padding: 0 6px 0 0;`;

const Navigator = () => (
  <Nav>
    <PanelTitle>Navigator - Project Map<Spacer /><Tri c="#fff" s={3} /><TitleClose aria-label="Close navigator"><CloseMark /></TitleClose></PanelTitle>
    <NavTools>
      <XpButton $w={30} $h={22} aria-label="Chooser"><Icon name="chooser" s={0.9} /><Tri d="right" s={3} /></XpButton>
      <Flyout $w={30} $h={24} $on aria-label="Project map"><Icon name="house" s={0.9} /></Flyout>
      <Flyout $w={24} aria-label="View map"><Icon name="viewMap" s={0.9} /></Flyout>
      <Flyout $w={25} aria-label="Layout book"><Icon name="layout" s={0.9} /></Flyout>
      <Flyout $w={24} aria-label="Publisher"><Icon name="publish" s={0.9} /></Flyout>
    </NavTools>
    <TreeBox>
      <TreeView>
        <TreeClip>
          <Tree>
            {tree.map((n) => (
              <TreeRow key={n.text} $depth={n.d}>
                {n.open ? <Expander aria-label={`Collapse ${n.text}`} /> : <Branch />}
                <Icon name={n.icon} s={0.9} />
                <Leaf $bold={n.bold}>{n.text}</Leaf>
              </TreeRow>
            ))}
          </Tree>
        </TreeClip>
        <ScrollBar v t={16} before={2} len={114} />
      </TreeView>
      <HWrap><ScrollBar t={16} before={2} len={54} /></HWrap>
    </TreeBox>
    <NavActions>
      <XpButton $w={21} $h={22} aria-label="New story"><Icon name="newStory" s={0.9} /></XpButton>
      <XpButton $w={21} $h={22} aria-label="Delete"><Icon name="del" s={0.9} /></XpButton>
    </NavActions>
    <GroupHead $indent={12}><Tri /><Indent>Properties</Indent></GroupHead>
    <PropRow>
      <Icon name="story" s={0.6} />
      <StoryNo>0.</StoryNo>
      <StoryName aria-label="Story name" defaultValue="Ground Floor" />
    </PropRow>
    <SettingsWrap><XpButton $h={21}>Settings...</XpButton></SettingsWrap>
    <Quick>
      <PanelTitle>Quick Options<Spacer /><TitleTri><Tri c="#fff" /></TitleTri><TitleClose aria-label="Close quick options"><CloseMark /></TitleClose></PanelTitle>
      <QuickGap />
      {quick.map(([icon, text]) => (
        <QuickRow key={text}>
          <Icon name={icon} s={0.6} />
          <SelectWrap><Pick aria-label={text}><option>{text}</option></Pick><Tri d="right" s={4} /></SelectWrap>
        </QuickRow>
      ))}
    </Quick>
  </Nav>
);

const WindowLink = styled.button`
  display: flex;
  align-items: center;
  gap: 3px;
  width: 80px;
  height: 26px;
  white-space: nowrap;
  padding-left: 3px;
  flex: none;
  font-size: 10px;
`;
const ScaleButton = styled(XpButton)`margin-left: 2px; font-size: 10px;`;
const NextButton = styled.button`
  display: flex;
  align-items: center;
  justify-content: center;
  flex: none;
  width: 19px;
  height: 14px;
  margin: 0 7px 0 3px;
  border: 1px solid #cfccbc;
  border-radius: 3px;
`;

export default function App() {
  return (
    <Page>
      <Global />
      <Frame>
        <TitleBar>
          <Icon name="appIcon" s={0.8} />
          <WindowTitle>Untitled - Graphisoft ArchiCAD 11 - [Untitled / 0. Ground Floor]</WindowTitle>
          <CaptionButton aria-label="Minimize"><svg width="18" height="18"><path d="M4 12h7v3H4z" fill="#fff" /></svg></CaptionButton>
          <CaptionButton aria-label="Restore"><svg width="18" height="18"><path d="M7 7V4h7v7h-3M4 8h7v6H4zM4 9h7" fill="none" stroke="#fff" strokeWidth="1.500" /></svg></CaptionButton>
          <CaptionButton $close aria-label="Close"><svg width="18" height="18"><path d="M4 4l10 10M14 4L4 14" stroke="#fff" strokeWidth="2.500" /></svg></CaptionButton>
        </TitleBar>
        <MenuBar>
          <Icon name="docIcon" s={0.8} />
          {menus.map((m) => <MenuItem key={m}>{m}</MenuItem>)}
          <Spacer />
          <MdiButton aria-label="Minimize document"><svg width="14" height="12"><path d="M3 9h6v2H3z" /></svg></MdiButton>
          <MdiButton aria-label="Restore document"><svg width="14" height="12"><path d="M5 4V2h6v5H9M3 5h6v5H3zM3 6h6" fill="none" stroke="#000" strokeWidth="1.500" /></svg></MdiButton>
          <MdiButton aria-label="Close document"><svg width="14" height="12"><path d="M3 2l7 8M10 2l-7 8" stroke="#000" strokeWidth="2" /></svg></MdiButton>
        </MenuBar>
        <Toolbar $h={32}>
          <Grip />
          <Tools names={["newDoc", "open", "save", "print"]} s={0.9} />
          <Sep />
          <Tools names={["cut", "copy", "paste"]} s={0.9} />
          <Sep />
          <Tools names={["undo", "redo"]} s={0.9} />
          <Sep />
          <Tools names={["findSel", "dropper", "syringe"]} s={0.9} />
          <Sep />
          <DropTool name="snapGuide" on />
          <DropTool name="snapPoint" on />
          <DropTool name="tracker" on />
          <ComboGap />
          <DropTool name="gridSnap" s={0.9} />
          <DropTool name="layers" s={0.9} />
          <DropTool name="weight" dim s={0.9} />
          <Tool $on $w={24} aria-label="Suspend groups"><Icon name="suspend" /></Tool>
          <Tools names={["ruler", "cross"]} w={25} s={0.9} />
          <Sep />
          <Tools names={["trim", "hammer", "adjust", "corner", "fillet", "resize", "stretch"]} s={0.9} />
          <Sep />
          <Tools names={["group", "pen"]} s={0.9} />
          <Spacer />
          <Grip />
          <Tools names={["planView"]} w={34} />
        </Toolbar>
        <Body>
          <ToolBox>
            <PanelTitle>ToolBox<Spacer /><TitleClose aria-label="Close toolbox"><CloseMark /></TitleClose></PanelTitle>
            <GroupHead $indent={22}>Select</GroupHead>
            <ToolList $pad={1}>
              <li><ToolRow $on><Icon name="arrow" w={26} h={22} />Arrow</ToolRow></li>
              <li><ToolRow><Icon name="marquee" w={26} h={22} />Marquee</ToolRow></li>
            </ToolList>
            <GroupHead><Tri />Design</GroupHead>
            <ToolList $pad={2}>
              {designTools.map(([i, t]) => <li key={t}><ToolRow><Icon name={i} w={26} h={22} />{t}</ToolRow></li>)}
            </ToolList>
            <GroupHead><Tri />Document</GroupHead>
            <DocArea>
              <ToolList $clip $pad={1}>
                {docTools.map(([i, t]) => <li key={t}><ToolRow><Icon name={i} w={26} h={22} />{t}</ToolRow></li>)}
              </ToolList>
              <ScrollBar v t={9} b={16} before={1} len={72} />
            </DocArea>
            <GroupHead $indent={9}><Tri d="right" /><Indent>More</Indent></GroupHead>
          </ToolBox>
          <RightSide>
            <InfoPalette />
            <Work>
              <PlanColumn>
                <PlanArea>
                  <FloorPlan />
                  <ScrollBar v t={16} before={22} len={258} />
                </PlanArea>
                <PlanBar>
                  <Flyout $w={23} $h={16} $on aria-label="Quick options"><Icon name="quickOpt" s={0.8} /></Flyout>
                  <Flyout $w={25} $h={16} aria-label="Zoom box"><Icon name="zoomBox" s={0.9} /></Flyout>
                  <Flyout $w={22} $h={16} $on aria-label="Section"><Icon name="section" s={0.8} /></Flyout>
                  <ScaleButton $w={60} $h={15}>1:100</ScaleButton>
                  <ScaleButton $w={66} $h={15}>88 %</ScaleButton>
                  <NextButton aria-label="Next"><Tri d="right" c="#aca899" s={4} /></NextButton>
                  {["zoomPm", "zoomIn", "zoomOut", "hand", "fit", "zoomPrev", "zoomNext"].map((n) => (
                    <Flyout key={n} $w={23} $h={16} aria-label={n}><Icon name={n} s={0.9} /></Flyout>
                  ))}
                  <HTrack><ScrollBar t={16} before={65} len={181} /></HTrack>
                </PlanBar>
              </PlanColumn>
              <Navigator />
            </Work>
          </RightSide>
        </Body>
        <Toolbar $h={33}>
          <Grip />
          <WindowLink><Icon name="win3d" s={0.9} />3D Window</WindowLink>
          <Sep />
          <Tools names={["house3d", "cam3d"]} w={27} s={0.9} />
          <DropTool name="axes" dim s={0.9} />
          <Sep $w={7} />
          <Tools names={["walk", "globe"]} s={0.9} />
          <Sep $w={7} />
          <Tools names={["cut3d", "home", "sun", "box3d"]} s={0.9} />
          <Sep />
          <Tools names={["cubeA", "cubeB", "cubeC"]} s={0.9} />
          <Sep />
          <DropTool name="plant" s={0.9} />
          <Tools names={["filter", "mirror", "weld", "doc3d"]} s={0.9} />
          <Sep $w={7} />
          <Tools names={["brush"]} s={0.9} />
          <Sep />
          <Tools names={["photo", "film", "movie", "scene"]} s={0.9} />
        </Toolbar>
        <StatusBar>
          <span>Enter Drag-to Point. [Drag a Copy]</span>
          <Spacer />
          <StatusCell><Icon name="drive" s={0.8} />C: 7.44 GB</StatusCell>
          <StatusCell><Icon name="chip" s={0.8} />547.5 MB</StatusCell>
        </StatusBar>
        <TaskBar />
      </Frame>

      <Tracker>
        <svg width="12" height="12"><path d="M2 10l8-8M2 6v4h4M7 2h3v3" fill="none" stroke="#16167c" /></svg>
        <dt><Strong>Distance</Strong></dt><dd><Strong>2774</Strong></dd>
        <svg width="12" height="12"><path d="M10 2L2 6l8 4M7 2v8" fill="none" stroke="#16167c" /></svg>
        <dt>Angle</dt><dd>°90.00</dd>
      </Tracker>
      <Palette>
        <PaletteClose aria-label="Close palette"><svg width="9" height="9"><path d="M1 1l7 7M8 1L1 8" stroke="#fff" strokeWidth="2" /></svg></PaletteClose>
        <PaletteTools>
          <Tools names={["dragMove", "rotate", "mirrorPal", "elevate"]} w={25} />
          <Tool $on $w={25} aria-label="Drag a copy"><Icon name="copyDrag" s={0.9} /></Tool>
        </PaletteTools>
      </Palette>
      <Callout dir="rtl" lang="ar" $x={287} $y={265} $w={197} $h={118}>نحرك الماوس<br />باتجاه النسخ<br />المطلوب</Callout>
      <Callout dir="rtl" lang="ar" $x={299} $y={412} $w={185} $h={107} $tight>نضغط كلك في اي<br />نقطة في الشكل</Callout>
      <Callout dir="rtl" lang="ar" $x={430} $y={537} $w={228} $h={60}>نحدد العنصر المطلوب</Callout>
      <Callout dir="rtl" lang="ar" $x={696} $y={272} $w={229} $h={117}>نكتب المسافة بين<br />النسخة و الاخرى ثم<br />انتر</Callout>
      <Arrows width="100%" height="100%" aria-hidden="true">
        <path d="M483 421L580 466M726 389L711 411" stroke="#000" strokeWidth="2" />
        <path d="M590 471l-15 0 6-12zM704 422l2-15 11 8z" />
      </Arrows>
      <Numeral $x={270} $y={323}>3</Numeral>
      <Numeral $x={270} $y={465}>2</Numeral>
      <Numeral $x={657} $y={554}>1</Numeral>
      <Numeral $x={923} $y={238}>4</Numeral>
    </Page>
  );
}
